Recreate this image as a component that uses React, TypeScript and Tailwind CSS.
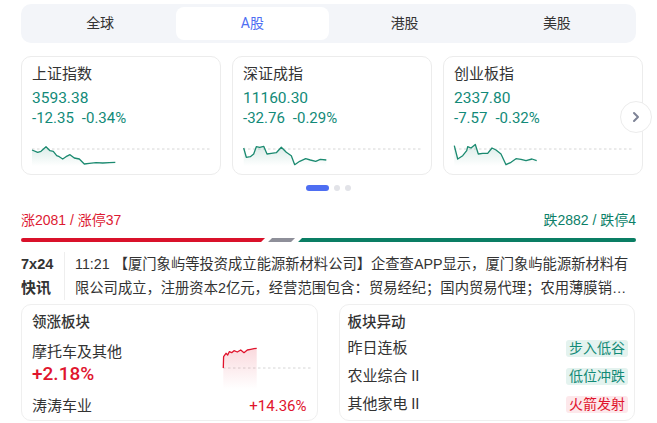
import React from "react";

type Pt = [number, number];

const GREEN = "#128a78";

function Spark({ pts, id, color, w, h, base, fillTo }: { pts: Pt[]; id: string; color: string; w: number; h: number; base: number; fillTo: number }) {
  const line = pts.map((p, i) => `${i ? "L" : "M"}${p[0]},${p[1]}`).join(" ");
  const last = pts[pts.length - 1];
  const area = `${line} L${last[0]},${fillTo} L${pts[0][0]},${fillTo} Z`;
  return (
    <svg width={w} height={h} viewBox={`0 0 ${w} ${h}`} className="block overflow-visible">
      <defs>
        <linearGradient id={id} x1="0" y1="0" x2="0" y2="1">
          <stop offset="0%" stopColor={color} stopOpacity="0.16" />
          <stop offset="100%" stopColor={color} stopOpacity="0" />
        </linearGradient>
      </defs>
      <line x1="0" y1={base} x2={w} y2={base} stroke="#d6d6d6" strokeWidth="1" strokeDasharray="2.5 2.5" />
      <path d={area} fill={`url(#${id})`} />
      <path d={line} fill="none" stroke={color} strokeWidth="1.3" strokeLinejoin="round" />
    </svg>
  );
}

const cards: { name: string; price: string; chg: string; pct: string; pts: Pt[] }[] = [
  {
    name: "上证指数",
    price: "3593.38",
    chg: "-12.35",
    pct: "-0.34%",
    pts: [[0, 6], [5.7, 8.3], [9, 7.3], [14, 2.7], [18, 6.7], [21.3, 7.3], [24.7, 11.7], [27.3, 12.7], [30.7, 15], [34, 12.7], [38, 10.7], [42.3, 14], [47.3, 15], [52.3, 20], [57.3, 19.3], [64, 18.7], [70.7, 19], [77.3, 18.7], [83.3, 18.3]],
  },
  {
    name: "深证成指",
    price: "11160.30",
    chg: "-32.76",
    pct: "-0.29%",
    pts: [[0.7, 4], [3.3, 13.3], [7.3, 12.7], [10.7, 10], [13.3, 2.7], [16.7, 3.3], [20.7, 2.3], [24, 10], [28.3, 9.3], [33.3, 8.7], [38.3, 3.3], [43.3, 8.3], [48.3, 11.7], [51.7, 20.7], [56.7, 17.3], [62.7, 14.7], [67.3, 16], [72.7, 17.3], [77.3, 15.3], [83.3, 16]],
  },
  {
    name: "创业板指",
    price: "2337.80",
    chg: "-7.57",
    pct: "-0.32%",
    pts: [[0.3, 1.7], [3.7, 15], [8.7, 11.7], [12.7, 6.7], [13.7, 2.7], [17, 4], [21.3, 0.5], [24.3, 10], [28.7, 9.3], [33.7, 9.3], [38, 4], [42, 6], [47, 10], [52, 20.7], [57, 18.3], [62, 14.7], [67, 15.3], [72, 16.7], [78, 15], [82.7, 16.7]],
  },
];

const redPts: Pt[] = [[0.3, 23], [0.6, 11.7], [3, 8.3], [4.7, 10], [6.3, 6.7], [8.7, 7.7], [11, 5.7], [14.3, 7], [17.7, 5], [21, 7.7], [24.3, 5], [27.7, 4.3], [31, 3.7], [33.7, 3.3]];

export default function App() {
  return (
    <div className="w-[657px] h-[423px] overflow-hidden bg-white px-[21px] pt-[4px] font-['Roboto','Noto_Sans_CJK_SC',sans-serif] text-[#333]">
      {/* Tabs */}
      <div className="flex h-[39px] rounded-[10px] bg-[#f3f5f9] p-[3px]">
        {["全球", "A股", "港股", "美股"].map((t, i) => (
          <div
            key={t}
            className={
              "flex flex-1 items-center justify-center rounded-[8px] text-[14px] " +
              (i === 1 ? "bg-white text-[#4e6ef2]" : "text-[#333]")
            }
          >
            {t}
          </div>
        ))}
      </div>

      {/* Index cards */}
      <div className="relative mt-[13px]">
        <div className="flex gap-[11px]">
          {cards.map((c, i) => (
            <div key={c.name} className="flex h-[119px] flex-1 flex-col rounded-[10px] border border-[#ececec] px-[10px] pt-[7px]">
              <div className="text-[15px] leading-[20px] text-[#333]">{c.name}</div>
              <div className="mt-[4px] text-[15.5px] leading-[20px]" style={{ color: GREEN }}>{c.price}</div>
              <div className="text-[15px] leading-[20px] flex gap-[8px]" style={{ color: GREEN }}>
                <span>{c.chg}</span>
                <span>{c.pct}</span>
              </div>
              <div className="mt-[16px]">
                <Spark pts={c.pts} id={"g" + i} color="#1b8a70" w={178} h={22} base={5} fillTo={22} />
              </div>
            </div>
          ))}
        </div>
        <div className="absolute right-[-16px] top-[45px] flex h-[32px] w-[32px] items-center justify-center rounded-full border border-[#ececec] bg-white">
          <svg width="12" height="12" viewBox="0 0 12 12">
            <path d="M4 2 L8 6 L4 10" fill="none" stroke="#7d8295" strokeWidth="2" strokeLinecap="round" strokeLinejoin="round" />
          </svg>
        </div>
      </div>

      {/* Dots */}
      <div className="mt-[10px] flex justify-center gap-[5px]">
        <div className="h-[6px] w-[23px] rounded-full bg-[#4e6ef2]" />
        <div className="h-[6px] w-[6px] rounded-full bg-[#e2e3e8]" />
        <div className="h-[6px] w-[6px] rounded-full bg-[#e2e3e8]" />
      </div>

      {/* Breadth */}
      <div className="mt-[19px] flex justify-between font-['Liberation_Sans','Noto_Sans_CJK_SC',sans-serif] text-[14px] leading-[20px]">
        <span className="text-[#dd1a33]">涨2081 / 涨停37</span>
        <span style={{ color: "#0c7f68" }}>跌2882 / 跌停4</span>
      </div>
      <div className="mt-[8px] flex h-[4px] gap-[3px]">
        <div className="grow-[2081] rounded-l-[2px] bg-[#d9112a] [clip-path:polygon(0_0,100%_0,calc(100%-4px)_100%,0_100%)]" />
        <div className="w-[27px] shrink-0 bg-[#8e8f99] [clip-path:polygon(4px_0,100%_0,calc(100%-4px)_100%,0_100%)]" />
        <div className="grow-[2882] rounded-r-[2px] bg-[#0a7e64] [clip-path:polygon(4px_0,100%_0,100%_100%,0_100%)]" />
      </div>

      {/* News */}
      <div className="mt-[10px] flex h-[48px] overflow-hidden font-['Liberation_Sans','Noto_Sans_CJK_SC',sans-serif]">
        <div className="flex w-[44px] shrink-0 flex-col border-r border-[#eeeeee] font-bold text-[#333]">
          <span className="text-[14.5px] leading-[24px]">7x24</span>
          <span className="text-[15px] leading-[24px]">快讯</span>
        </div>
        <div className="ml-[10px] mr-[4px] line-clamp-2 text-[14.3px] leading-[24px] text-[#333]">
          11:21 【厦门象屿等投资成立能源新材料公司】企查查APP显示，厦门象屿能源新材料有限公司成立，注册资本2亿元，经营范围包含：贸易经纪；国内贸易代理；农用薄膜销售；化工产品销售
        </div>
      </div>

      {/* Bottom cards */}
      <div className="mt-[4px] grid grid-cols-2 gap-[21px] pr-[1px]">
        <div className="h-[117px] rounded-[10px] border border-[#efefef] px-[10px] pt-[7px]">
          <div className="text-[14.5px] font-medium leading-[22px] text-[#333]">领涨板块</div>
          <div className="mt-[6px] flex">
            <div className="flex-1">
              <div className="text-[15px] leading-[24px] text-[#333]">摩托车及其他</div>
              <div className="text-[19px] font-medium leading-[20px] text-[#e0142d]">+2.18%</div>
            </div>
            <div className="mr-[-4px] mt-[5px] h-[44px]">
              <Spark pts={redPts} id="gr" color="#e0142d" w={88} h={44} base={23} fillTo={44} />
            </div>
          </div>
          <div className="mt-[5px] flex items-center justify-between leading-[24px]">
            <span className="text-[15px] text-[#333]">涛涛车业</span>
            <span className="text-[15px] text-[#e0142d]">+14.36%</span>
          </div>
        </div>

        <div className="h-[117px] rounded-[10px] border border-[#efefef] pl-[8px] pr-[6px] pt-[7px]">
          <div className="text-[14.5px] font-medium leading-[22px] text-[#333]">板块异动</div>
          {[
            { n: "昨日连板", b: "步入低谷", red: false },
            { n: "农业综合 II", b: "低位冲跌", red: false },
            { n: "其他家电 II", b: "火箭发射", red: true },
          ].map((r, i) => (
            <div key={r.n} className={"flex items-center justify-between " + (i === 0 ? "mt-[3px]" : "mt-[6px]")}>
              <span className="text-[15px] leading-[22px] text-[#333]">{r.n}</span>
              <span
                className={
                  "rounded-[3px] px-[3px] text-[14px] leading-[17px] " +
                  (r.red ? "bg-[#fde8eb] text-[#e0142d]" : "bg-[#e4f3ef] text-[#128a76]")
                }
              >
                {r.b}
              </span>
            </div>
          ))}
        </div>
      </div>
    </div>
  );
}
